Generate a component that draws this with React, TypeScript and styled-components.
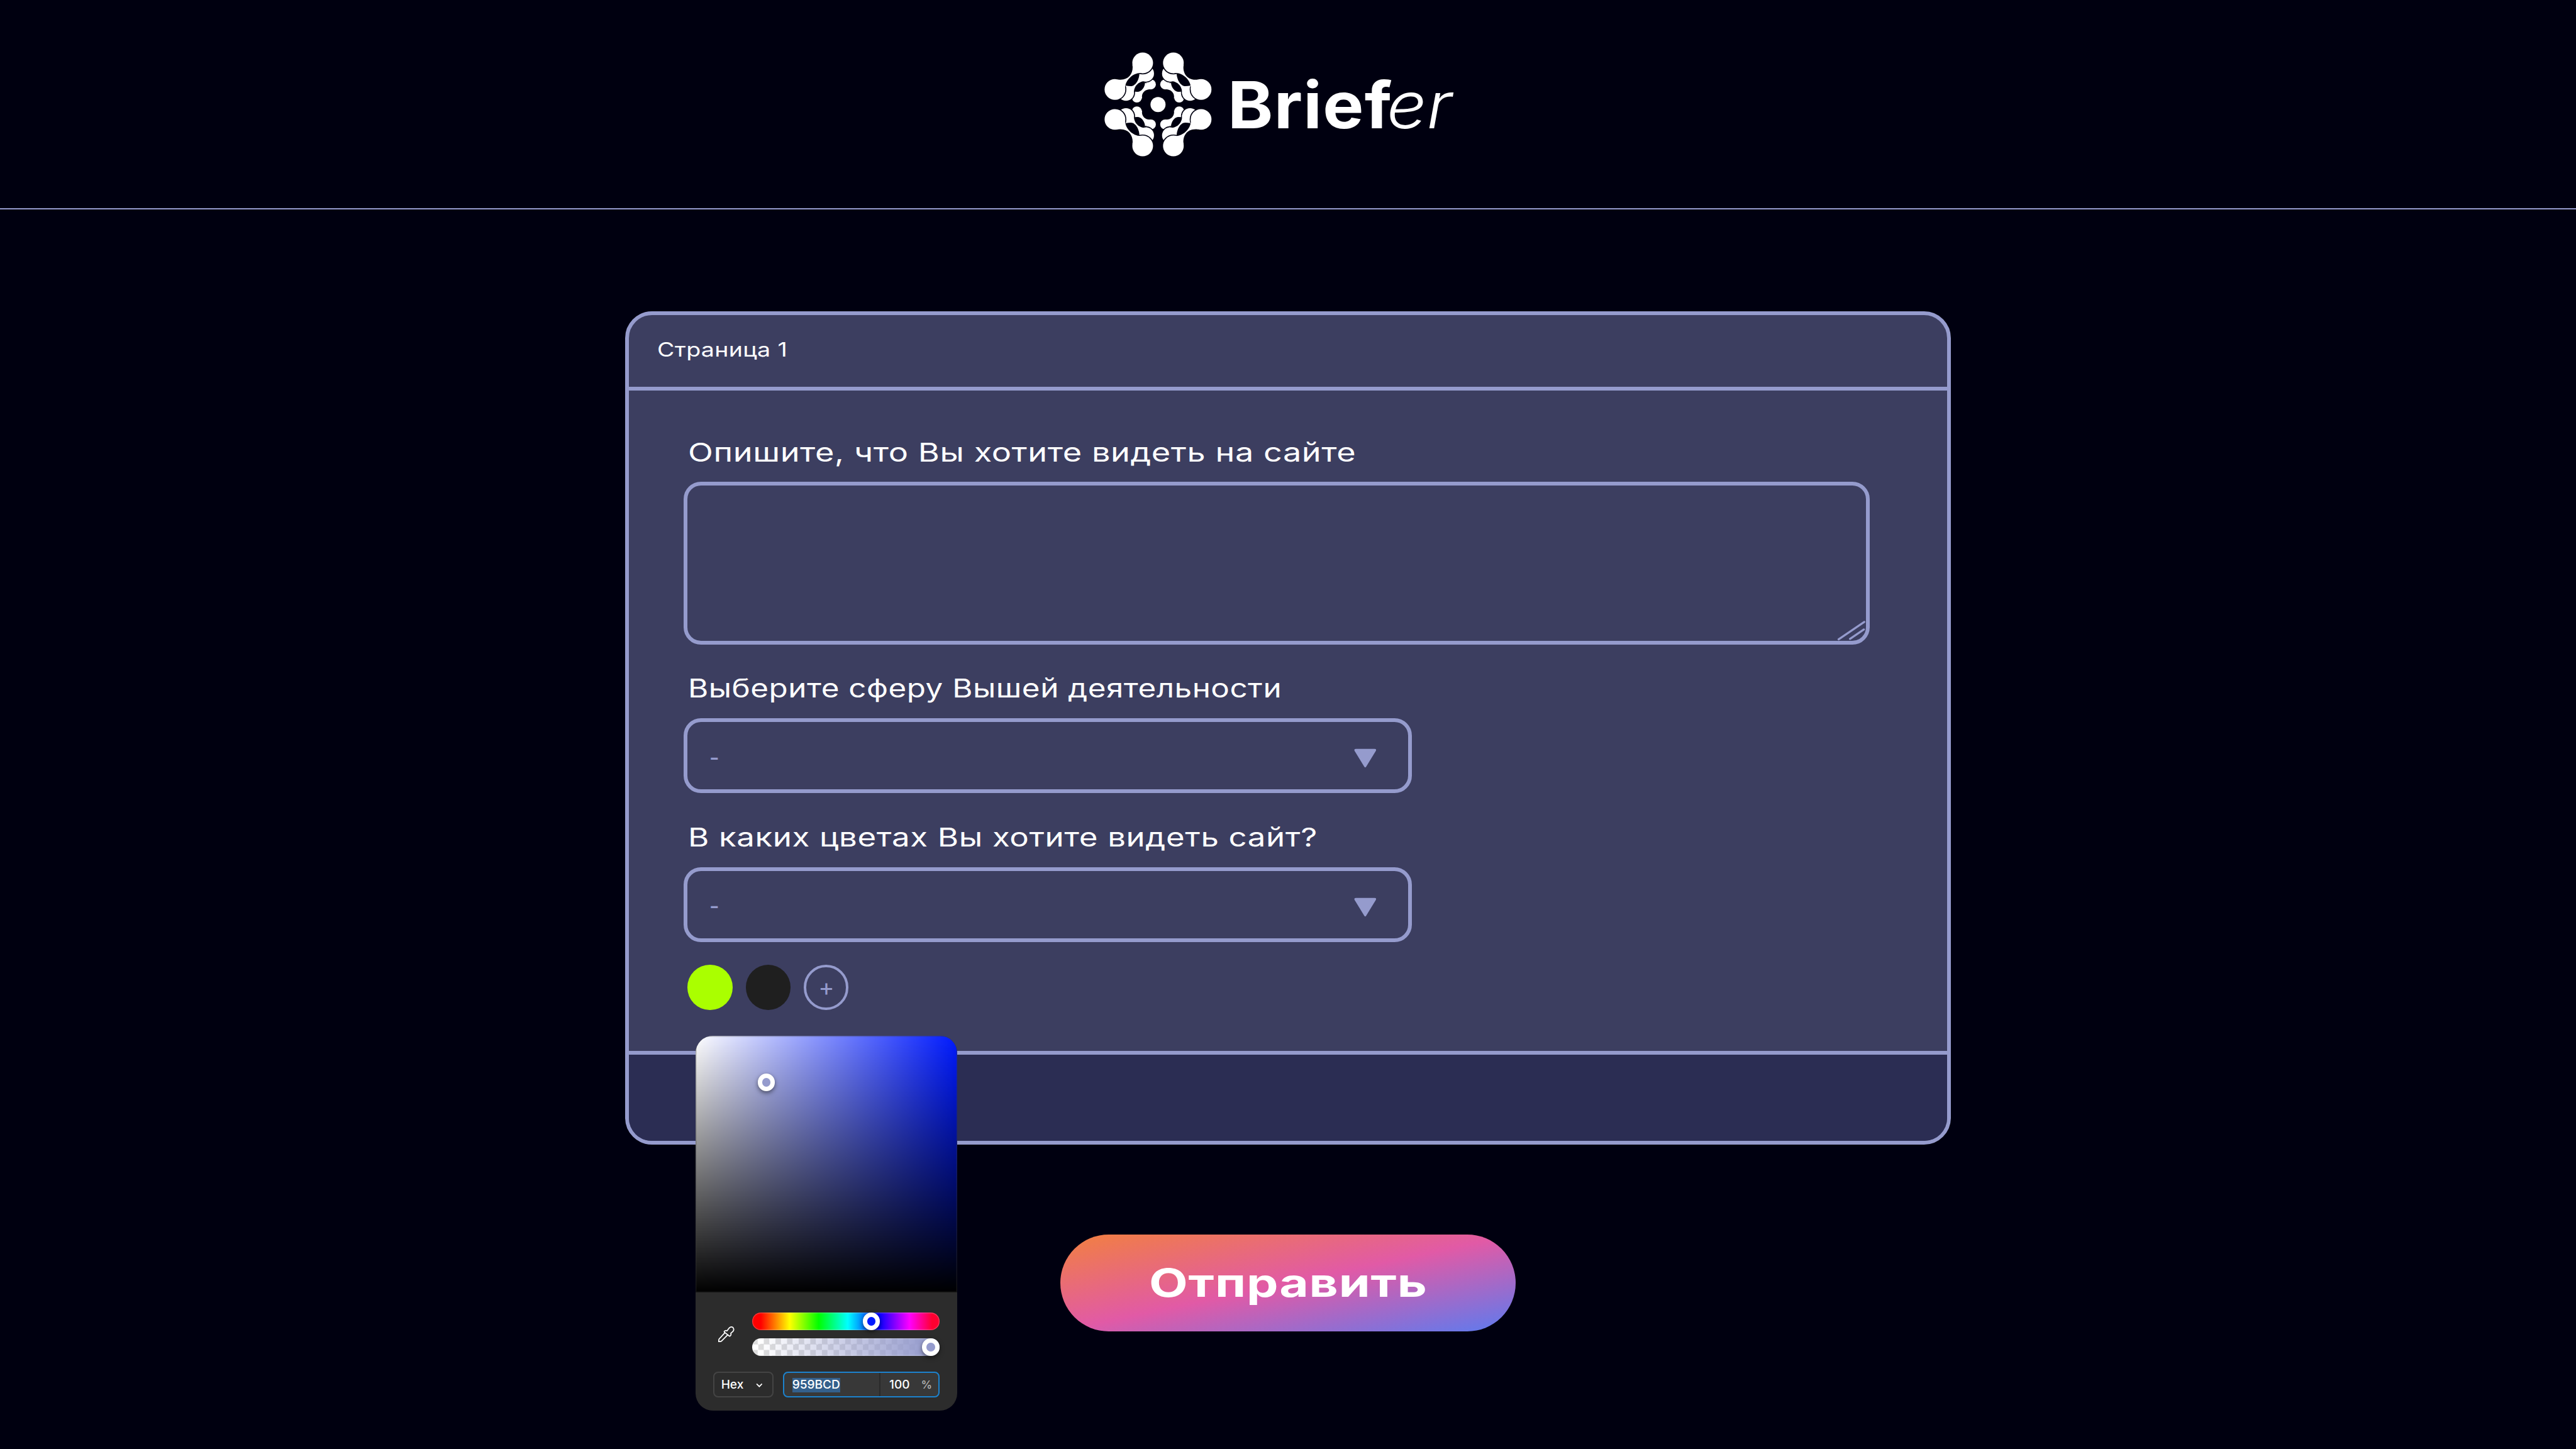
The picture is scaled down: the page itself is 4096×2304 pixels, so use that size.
import React from "react";
import styled, { createGlobalStyle } from "styled-components";

/* The page is laid out on an artboard 5760 units wide that scales with the window. */
const u = (n: number) => `${(n / 57.6).toFixed(4)}vw`;

const color = {
  page: "#000010",
  panel: "#3c3e60",
  footer: "#2b2d53",
  line: "#959bcd",
  text: "#ffffff",
  picker: "#2c2c2c",
};

const GlobalStyle = createGlobalStyle`
  *, *::before, *::after { box-sizing: border-box; }
  body {
    margin: 0;
    background: ${color.page};
    color: ${color.text};
    font-family: Inter, "Noto Sans", sans-serif;
    overflow: hidden;
  }
  button, textarea { font: inherit; color: inherit; }
`;

const Page = styled.div`
  display: flex;
  flex-direction: column;
  height: 100vh;
`;

const Header = styled.header`
  display: flex;
  justify-content: center;
  flex: none;
  height: ${u(468)};
  padding: ${u(117)} ${u(40)} 0 0;
  border-bottom: ${u(3)} solid ${color.line};
`;

const Brand = styled.div`
  display: flex;
  width: ${u(780)};
  height: ${u(234)};
`;

const Mark = styled.svg`
  flex: none;
  width: ${u(240)};
  height: ${u(234)};
`;

const Wordmark = styled.div`
  display: flex;
  padding: ${u(28)} 0 0 ${u(34.5)};
  font-size: ${u(144.4)};
  line-height: ${u(180)};
  white-space: nowrap;
`;

const WordBold = styled.span`
  font-weight: 700;
  letter-spacing: 0.012em;
  transform: scaleX(1.065);
  transform-origin: left;
`;

const WordLight = styled.span`
  padding-left: ${u(9)};
  font-weight: 300;
  font-style: italic;
  transform: scaleX(1.09);
  transform-origin: left;
`;

const Main = styled.main`
  display: flex;
  flex-direction: column;
  align-items: center;
  padding-top: ${u(228)};
`;

const Card = styled.section`
  display: flex;
  flex-direction: column;
  width: ${u(2964)};
  height: ${u(1863)};
  border: ${u(9)} solid ${color.line};
  border-radius: ${u(60)};
  background: ${color.panel};
`;

const Stretched = styled.span<{ $scale: number; $spacing?: number }>`
  display: inline-block;
  transform: scaleX(${(p) => p.$scale});
  transform-origin: left;
  letter-spacing: ${(p) => p.$spacing ?? 0}em;
  white-space: nowrap;
`;

const CardHeader = styled.div`
  flex: none;
  height: ${u(168.5)};
  padding: ${u(48)} 0 0 ${u(62.5)};
  border-bottom: ${u(9)} solid ${color.line};
  font-size: ${u(43.3)};
  line-height: ${u(60)};
`;

const CardBody = styled.div`
  flex: 1;
  padding: ${u(101)} ${u(172)} 0 ${u(122.2)};
`;

const CardFooter = styled.div`
  flex: none;
  height: ${u(201)};
  border-top: ${u(9)} solid ${color.line};
  border-radius: 0 0 ${u(51)} ${u(51)};
  background: ${color.footer};
`;

const Field = styled.div`
  display: flex;
  flex-direction: column;
  margin-bottom: ${u(61)};
`;

const Label = styled.label`
  height: ${u(72)};
  margin-bottom: ${u(32)};
  padding: ${u(2)} 0 0 ${u(9.5)};
  font-size: ${u(57.8)};
  line-height: ${u(72)};
`;

const TextAreaFrame = styled.div`
  display: flex;
  position: relative;
  width: ${u(2652)};
  height: ${u(363)};
  border: ${u(9)} solid ${color.line};
  border-radius: ${u(39)};
`;

const TextArea = styled.textarea`
  flex: 1;
  padding: ${u(40)};
  border: 0;
  outline: 0;
  resize: none;
  background: transparent;
`;

const ResizeGrip = styled.svg`
  position: absolute;
  right: ${u(1)};
  bottom: 0;
  width: ${u(64)};
  height: ${u(46)};
`;

const Select = styled.button`
  display: flex;
  align-items: center;
  justify-content: space-between;
  width: ${u(1629)};
  height: ${u(168)};
  padding: ${u(9)} ${u(72)} 0 ${u(49)};
  border: ${u(9)} solid ${color.line};
  border-radius: ${u(39)};
  background: transparent;
  color: ${color.line};
  font-size: ${u(45)};
  font-weight: 600;
  line-height: ${u(60)};
  text-align: left;
`;

const Arrow = styled.svg`
  width: ${u(50)};
  height: ${u(44)};
  margin-top: ${u(3)};
`;

const Swatches = styled.div`
  display: flex;
  position: relative;
  gap: ${u(30)};
  margin-top: ${u(-10)};
  padding-left: ${u(9)};
`;

const Swatch = styled.button<{ $fill?: string }>`
  display: grid;
  place-items: center;
  width: ${u(100)};
  height: ${u(100)};
  padding: 0;
  border: ${(p) => (p.$fill ? "0" : `${u(5.7)} solid ${color.line}`)};
  border-radius: 50%;
  background: ${(p) => p.$fill ?? "transparent"};
  color: ${color.line};
  font-size: ${u(54)};
  line-height: ${u(50)};
`;

const Picker = styled.div`
  position: absolute;
  z-index: 2;
  top: ${u(158)};
  left: ${u(26.6)};
  width: ${u(585)};
  height: ${u(838)};
  overflow: hidden;
  border-radius: ${u(39)};
  background: ${color.picker};
`;

const Spectrum = styled.div`
  position: relative;
  height: ${u(574)};
  background:
    linear-gradient(to bottom, transparent, #000),
    linear-gradient(to right, #fff, #001aff);
  box-shadow: inset 0 0 0 ${u(2)} rgba(60, 60, 60, 0.35);
`;

const Handle = styled.span<{ $x: number; $y: number; $fill: string }>`
  position: absolute;
  left: ${(p) => u(p.$x - 19.5)};
  top: ${(p) => u(p.$y - 19.5)};
  width: ${u(39)};
  height: ${u(39)};
  border: ${u(9.9)} solid #fff;
  border-radius: 50%;
  background: ${(p) => p.$fill};
  box-shadow: 0 ${u(4)} ${u(10)} rgba(0, 0, 0, 0.5);
`;

const Controls = styled.div`
  display: flex;
  align-items: center;
  padding: ${u(45)} ${u(39)} 0 ${u(49)};
`;

const Dropper = styled.svg`
  width: ${u(38)};
  height: ${u(38)};
  margin-right: ${u(40)};
`;

const Sliders = styled.div`
  display: flex;
  flex-direction: column;
  gap: ${u(19.3)};
  width: ${u(419)};
`;

const Track = styled.div`
  position: relative;
  height: ${u(39)};
  border-radius: ${u(19.5)};
  box-shadow: inset 0 0 0 ${u(2)} rgba(255, 255, 255, 0.2);
`;

const HueTrack = styled(Track)`
  background: linear-gradient(
    to right,
    #f00 4.6%, #ff0 20%, #0f0 35.5%, #0ff 51%, #00f 67.5%, #f0f 84%, #ff0030 96%
  );
`;

const AlphaTrack = styled(Track)`
  background:
    linear-gradient(to right, rgba(149, 155, 205, 0) 4.6%, #959bcd 95.4%),
    repeating-conic-gradient(#fff 0 25%, #dcdcdc 0 50%) 0 0 / ${u(26)} ${u(26)};
`;

const Inputs = styled.div`
  display: flex;
  gap: ${u(20)};
  padding: ${u(34.5)} ${u(39)} 0 ${u(39.5)};
  font-size: ${u(26.8)};
  font-weight: 500;
  line-height: ${u(32)};
`;

const Format = styled.div`
  display: flex;
  align-items: center;
  justify-content: space-between;
  width: ${u(135.5)};
  height: ${u(58)};
  padding: ${u(3)} ${u(22)} 0 ${u(15)};
  border: ${u(2.9)} solid #444;
  border-radius: ${u(11)};
`;

const Chevron = styled.svg`
  width: ${u(15)};
  height: ${u(10)};
  margin-top: ${u(1)};
`;

const HexField = styled.div`
  display: flex;
  flex: 1;
  height: ${u(58)};
  border: ${u(2.9)} solid #1c82cd;
  border-radius: ${u(11)};
  background: #383838;
`;

const HexValue = styled.div`
  display: flex;
  align-items: center;
  width: ${u(216)};
  padding: ${u(3)} 0 0 ${u(18.5)};
  border-right: ${u(2.9)} solid #2a2a2a;
`;

const Selected = styled.span`
  background: #34608c;
`;

const Opacity = styled.div`
  display: flex;
  flex: 1;
  align-items: center;
  justify-content: space-between;
  padding: ${u(3)} ${u(14)} 0 ${u(19.5)};
`;

const Percent = styled.span`
  color: #b3b3b3;
  font-size: ${u(25)};
`;

const Submit = styled.button`
  display: flex;
  justify-content: flex-start;
  width: ${u(1019)};
  height: ${u(217)};
  margin-top: ${u(201)};
  padding: ${u(54)} 0 0 ${u(199)};
  border: 0;
  border-radius: ${u(109)};
  background: linear-gradient(to bottom right, #f2803f, #e15aa6 50%, #5c7bef);
  font-size: ${u(86.7)};
  font-weight: 700;
  line-height: ${u(110)};
`;

const Quadrant = () => (
  <>
    <circle cx="402" cy="297" r="33.5" />
    <circle cx="308" cy="385" r="33.5" />
    <path d="M405 330 C372 326 336 346 343 392 L285 350 L363 283 Z" />
    <path fill={color.page} d="M363 280 C364 315 338 347 312 347 L293 346 L270 330 L330 265 Z" />
    <g stroke={color.page} strokeWidth="14">
      <circle cx="369" cy="224" r="54" />
      <circle cx="235" cy="353" r="54" />
    </g>
    <circle cx="369" cy="224" r="54" />
    <circle cx="235" cy="353" r="54" />
    <path d="M375 278 C335 266 283 300 289 360 L225 330 L340 220 Z" />
    <path fill={color.page} d="M325 215 C327 262 300 309 268 309 Q250 309 235 306 L225 290 L300 205 Z" />
    <g stroke={color.page} strokeWidth="14">
      <circle cx="347" cy="153" r="69.5" />
      <circle cx="161" cy="331" r="69.5" />
    </g>
    <circle cx="347" cy="153" r="69.5" />
    <circle cx="161" cy="331" r="69.5" />
    <path d="M278 165 C288 218 255 276 180 264 L200 331 L230 331 C222 270 290 208 350 222 L345 160 Z" />
  </>
);

const Logo = () => (
  <Mark viewBox="90 81 720 702" fill="#fff">
    <g><Quadrant /></g>
    <g transform="matrix(-1 0 0 1 900 0)"><Quadrant /></g>
    <g transform="matrix(1 0 0 -1 0 863)"><Quadrant /></g>
    <g transform="matrix(-1 0 0 -1 900 863)"><Quadrant /></g>
    <circle cx="450" cy="432" r="50.5" />
  </Mark>
);

const SelectBox = () => (
  <Select type="button">
    <Stretched $scale={1.05}>-</Stretched>
    <Arrow viewBox="0 0 50 44" fill={color.line}>
      <path d="M4 1 H46 Q51 1 48.500 6 L27 41 Q25 44 23 41 L1.500 6 Q-1 1 4 1 Z" />
    </Arrow>
  </Select>
);

const ColorPicker = () => (
  <Picker>
    <Spectrum>
      <Handle $x={158.3} $y={104.5} $fill="#959bcd" />
    </Spectrum>
    <Controls>
      <Dropper viewBox="0 0 38 38" fill="none" stroke="#fff" strokeWidth="2.400" strokeLinejoin="round">
        <path d="M17 15 L3.500 29.500 Q2.500 31 2.500 35.500 Q7 35.500 8.500 34.500 L22.500 20.500" />
        <path d="M15 12.500 Q18 9.500 21 11.500 L26 5 Q30 1 34 3.500 Q38 8 34.500 12.500 L29.500 17 Q31 20 28.500 22.500 Q27 24 25.500 22.500 L15.500 14.500 Q14.500 13.500 15 12.500 Z" />
      </Dropper>
      <Sliders>
        <HueTrack><Handle $x={266.3} $y={19.5} $fill="#001aff" /></HueTrack>
        <AlphaTrack><Handle $x={399.3} $y={19.5} $fill="#959bcd" /></AlphaTrack>
      </Sliders>
    </Controls>
    <Inputs>
      <Format>
        <span>Hex</span>
        <Chevron viewBox="0 0 15 10" fill="none" stroke="#fff" strokeWidth="2.400">
          <path d="M1.500 2 L7.500 8 L13.500 2" />
        </Chevron>
      </Format>
      <HexField>
        <HexValue><Selected>959BCD</Selected></HexValue>
        <Opacity><span>100</span><Percent>%</Percent></Opacity>
      </HexField>
    </Inputs>
  </Picker>
);

export default function App() {
  return (
    <>
      <GlobalStyle />
      <Page>
        <Header>
          <Brand>
            <Logo />
            <Wordmark>
              <WordBold>Brief</WordBold>
              <WordLight>er</WordLight>
            </Wordmark>
          </Brand>
        </Header>
        <Main>
          <Card>
            <CardHeader><Stretched $scale={1.22} $spacing={0.009}>Страница 1</Stretched></CardHeader>
            <CardBody>
              <Field>
                <Label><Stretched $scale={1.27} $spacing={0.011}>Опишите, что Вы хотите видеть на сайте</Stretched></Label>
                <TextAreaFrame>
                  <TextArea />
                  <ResizeGrip viewBox="0 0 64 46" stroke={color.line} strokeWidth="4.500" strokeLinecap="round">
                    <path d="M3.500 43 L61 4 M29 42 L60 21" />
                  </ResizeGrip>
                </TextAreaFrame>
              </Field>
              <Field>
                <Label><Stretched $scale={1.2} $spacing={0.0105}>Выберите сферу Вышей деятельности</Stretched></Label>
                <SelectBox />
              </Field>
              <Field>
                <Label><Stretched $scale={1.24} $spacing={0.0125}>В каких цветах Вы хотите видеть сайт?</Stretched></Label>
                <SelectBox />
              </Field>
              <Swatches>
                <Swatch type="button" $fill="#aaff00" />
                <Swatch type="button" $fill="#1f1f1f" />
                <Swatch type="button">+</Swatch>
                <ColorPicker />
              </Swatches>
            </CardBody>
            <CardFooter />
          </Card>
          <Submit type="button"><Stretched $scale={1.3} $spacing={0.011}>Отправить</Stretched></Submit>
        </Main>
      </Page>
    </>
  );
}
